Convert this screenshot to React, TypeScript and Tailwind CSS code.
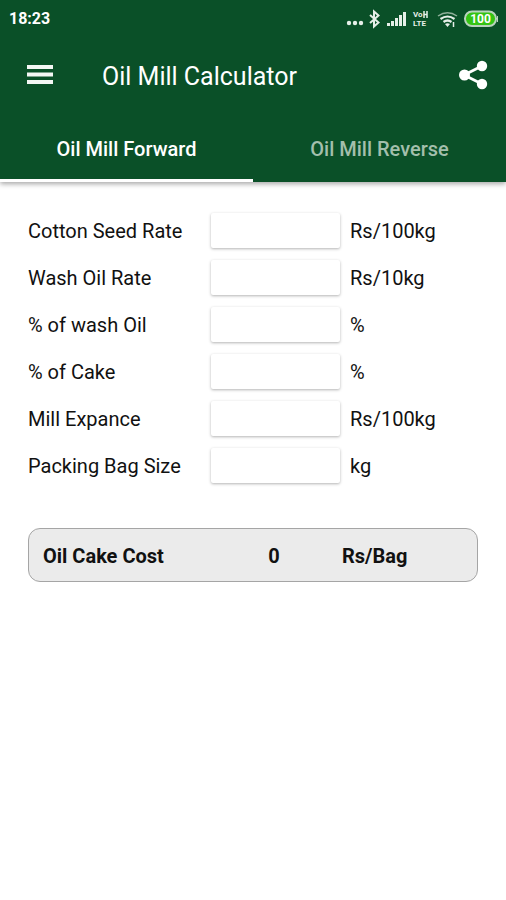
import { useState } from "react";
import { clsx } from "clsx";

const tabs = ["Oil Mill Forward", "Oil Mill Reverse"];

const fields = [
  { id: "seedRate", label: "Cotton Seed Rate", unit: "Rs/100kg" },
  { id: "oilRate", label: "Wash Oil Rate", unit: "Rs/10kg" },
  { id: "oilPercent", label: "% of wash Oil", unit: "%" },
  { id: "cakePercent", label: "% of Cake", unit: "%" },
  { id: "expense", label: "Mill Expance", unit: "Rs/100kg" },
  { id: "bagSize", label: "Packing Bag Size", unit: "kg" }
];

function cakeCost(values: Record<string, string>) {
  const num = (id: string) => Number(values[id]) || 0;
  if (!num("cakePercent")) return 0;
  const oilIncome = (num("oilPercent") * num("oilRate")) / 10;
  const perKg = (num("seedRate") + num("expense") - oilIncome) / num("cakePercent");
  return Math.round(perKg * num("bagSize") * 100) / 100;
}

function StatusBar() {
  return (
    <div className="flex h-[38px] items-center justify-between pl-[9px] pr-2 text-white">
      <span className="text-base font-bold">18:23</span>
      <div className="flex h-5 items-center">
        <svg viewBox="346 8 67 20" className="h-5 w-[67px]" fill="none" aria-hidden="true">
          <g fill="#e6efe8">
            <circle cx="349" cy="22" r="2.200" />
            <circle cx="355" cy="22" r="2.200" />
            <circle cx="361" cy="22" r="2.200" />
            <rect x="387" y="22" width="3" height="3" />
            <rect x="391" y="20" width="3" height="5" />
            <rect x="395" y="17" width="3" height="8" />
            <rect x="399" y="14" width="3" height="11" />
            <rect x="403" y="11" width="3" height="14" />
          </g>
          <path d="M370 14l8.500 7.500-4.500 4V10.500l4.500 4-8.500 7.500" stroke="#e6efe8" strokeWidth="2" />
        </svg>
        <span className="flex w-6 flex-col text-[8px] font-bold leading-[9px] text-[#e6efe8]">
          <span className="flex items-center">
            Vo
            <svg viewBox="0 0 5 7" className="h-[7px] w-[5px]" fill="none" stroke="#e6efe8" strokeWidth="1.500" aria-hidden="true">
              <path d="M1 0v7M4 0v7M1 3.500h3" />
            </svg>
          </span>
          <span>LTE</span>
        </span>
        <svg viewBox="437 8 61 20" className="h-5 w-[61px]" fill="none" aria-hidden="true">
          <path d="M438 15q9.500-6.500 19 0" stroke="#8fb09a" strokeWidth="1.500" />
          <path d="M440.500 18q7-5 14 0M443.500 21q4-3 8 0" stroke="#e6efe8" strokeWidth="2.200" />
          <path d="M445 23q2.500-1.500 5 0l-2.500 3z" fill="#e6efe8" />
          <path d="M453.500 21v5" stroke="#e6efe8" strokeWidth="1.500" />
          <rect x="465" y="10.500" width="31" height="14.500" rx="7" fill="#35c414" stroke="#b9d3bd" strokeWidth="2" />
          <path d="M497.500 15v6" stroke="#b9d3bd" />
          <text x="480.500" y="22" textAnchor="middle" fill="#fff" fontSize="12" fontWeight="700">
            100
          </text>
        </svg>
      </div>
    </div>
  );
}

export default function App() {
  const [activeTab, setActiveTab] = useState(0);
  const [values, setValues] = useState<Record<string, string>>({});

  return (
    <div className="min-h-screen bg-white font-[Roboto,sans-serif] text-[#111]">
      <header className="bg-[#0a5028] shadow-[0_2px_5px_rgba(0,0,0,0.35)]">
        <StatusBar />
        <div className="flex h-[76px] items-center pl-[26px] pr-4 text-white">
          <button type="button" aria-label="Open menu">
            <svg viewBox="0 0 28 22" className="h-[22px] w-7" fill="#f4f8f4" aria-hidden="true">
              <rect x="1" y="0" width="26" height="4" />
              <rect x="1" y="7.500" width="26" height="4" />
              <rect x="1" y="15" width="26" height="4" />
            </svg>
          </button>
          <h1 className="ml-12 flex-1 pt-0.5 text-[25px] leading-8">Oil Mill Calculator</h1>
          <button type="button" aria-label="Share">
            <svg viewBox="0 0 32 32" className="size-8" fill="#fff" aria-hidden="true">
              <path d="M24 6L6 15L24 24" fill="none" stroke="#fff" strokeWidth="2.800" />
              <circle cx="24" cy="6" r="5.200" />
              <circle cx="6.500" cy="15" r="5.500" />
              <circle cx="24" cy="24" r="5.200" />
            </svg>
          </button>
        </div>
        <div role="tablist" className="grid grid-cols-2">
          {tabs.map((tab, index) => (
            <button
              key={tab}
              type="button"
              role="tab"
              aria-selected={activeTab === index}
              onClick={() => setActiveTab(index)}
              className={clsx(
                "h-[68px] border-b-3 pt-1 text-xl font-medium",
                activeTab === index ? "border-white text-white" : "border-transparent text-[#a3bfac]"
              )}
            >
              {tab}
            </button>
          ))}
        </div>
      </header>

      <main className="px-7 pt-[31px]">
        <form className="space-y-3">
          {fields.map((field) => (
            <div key={field.id} className="flex h-[35px] items-center text-xl">
              <label htmlFor={field.id} className="w-[183px]">
                {field.label}
              </label>
              <input
                id={field.id}
                inputMode="decimal"
                value={values[field.id] ?? ""}
                onChange={(event) => setValues({ ...values, [field.id]: event.target.value })}
                className="h-[35px] w-[129px] rounded-xs bg-white px-2 shadow-[0_1px_3px_rgba(0,0,0,0.3)] outline-none"
              />
              <span className="ml-2.5">{field.unit}</span>
            </div>
          ))}
        </form>

        <div className="mt-[45px] flex h-[54px] items-center rounded-xl border border-[#a5a5a5] bg-[#ebebeb] px-3.5 pt-0.5 text-xl font-bold">
          <span className="w-[173px]">Oil Cake Cost</span>
          <output className="w-[116px] text-center">{cakeCost(values)}</output>
          <span className="ml-2.5">Rs/Bag</span>
        </div>
      </main>
    </div>
  );
}
